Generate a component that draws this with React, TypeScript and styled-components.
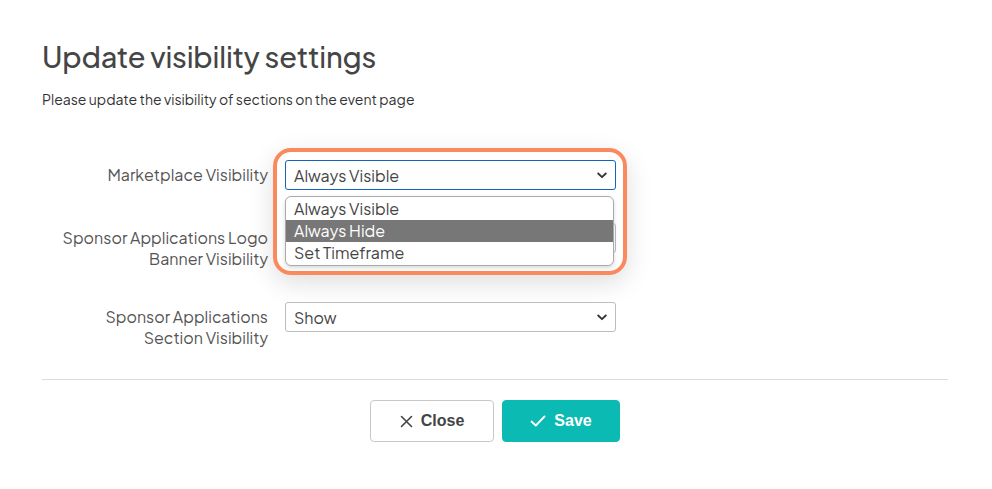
import React from 'react';
import styled, { createGlobalStyle } from 'styled-components';

const GlobalStyle = createGlobalStyle`
  body {
    margin: 0;
    background: #ffffff;
    font-family: "Plus Jakarta Sans", Inter, "Noto Sans", sans-serif;
  }
`;

const Page = styled.div`
  width: 992px;
  height: 489px;
  box-sizing: border-box;
  padding: 37px 44px 0 42px;
`;

const Title = styled.h1`
  margin: 0;
  font-size: 29px;
  font-weight: 500;
  line-height: 38px;
  color: #454545;
  letter-spacing: -0.2px;
`;

const Subtitle = styled.p`
  margin: 15px 0 0;
  font-size: 14px;
  line-height: 18px;
  color: #333;
`;

const Form = styled.div`
  display: flex;
  flex-direction: column;
  gap: 33px;
  margin-top: 52px;
`;

const Row = styled.div`
  display: grid;
  grid-template-columns: 226px 331px;
  column-gap: 17px;
  align-items: start;
`;

const Label = styled.div`
  text-align: right;
  padding-top: 4px;
  font-size: 16px;
  line-height: 21px;
  color: #555;
`;

const Field = styled.div`
  position: relative;
`;

const SelectBox = styled.div<{ $focused?: boolean }>`
  height: 30px;
  box-sizing: border-box;
  display: flex;
  align-items: center;
  justify-content: space-between;
  padding: 0 8px;
  background: #fff;
  border: 1px solid ${p => (p.$focused ? '#1565c0' : '#bdbdbd')};
  border-radius: 3px;
  font-size: 16px;
  color: #444;
`;

const Ring = styled.div`
  position: absolute;
  left: -12px;
  top: -12px;
  width: 354px;
  height: 127px;
  box-sizing: border-box;
  border: 4px solid #fa8a5e;
  border-radius: 18px;
  box-shadow: 0 8px 26px rgba(0, 0, 0, 0.13);
  pointer-events: none;
`;

const Menu = styled.ul`
  position: absolute;
  left: 0;
  top: 36px;
  width: 329px;
  margin: 0;
  padding: 1px 0;
  list-style: none;
  box-sizing: border-box;
  background: #fff;
  border: 1px solid #aaa;
  border-radius: 6px;
  box-shadow: 0 2px 4px rgba(0, 0, 0, 0.15);
  overflow: hidden;
  z-index: 2;
`;

const Option = styled.li<{ $active?: boolean }>`
  height: 22px;
  line-height: 22px;
  padding: 0 8px;
  font-size: 16px;
  color: ${p => (p.$active ? '#fff' : '#444')};
  background: ${p => (p.$active ? '#777777' : 'transparent')};
`;

const Divider = styled.hr`
  margin: 31px 0 0;
  border: none;
  border-top: 1px solid #dcdcdc;
`;

const Actions = styled.div`
  display: flex;
  justify-content: center;
  gap: 8px;
  margin-top: 20px;
`;

const Button = styled.button<{ $primary?: boolean }>`
  height: 42px;
  width: ${p => (p.$primary ? '118px' : '124px')};
  display: flex;
  align-items: center;
  justify-content: center;
  gap: 8px;
  border-radius: 4px;
  border: 1px solid ${p => (p.$primary ? '#0bbab3' : '#c8c8c8')};
  background: ${p => (p.$primary ? '#0bbab3' : '#fff')};
  color: ${p => (p.$primary ? '#fff' : '#444')};
  font-family: "Liberation Sans", Arial, sans-serif;
  font-weight: 700;
  font-size: 16px;
  cursor: pointer;
`;

const Chevron = () => (
  <svg width="10" height="7" viewBox="0 0 10 7" fill="none">
    <path d="M1.2 1.5 L5 5.2 L8.8 1.5" stroke="#333" strokeWidth="1.8" strokeLinecap="round" strokeLinejoin="round" />
  </svg>
);

const options = ['Always Visible', 'Always Hide', 'Set Timeframe'];

export default function App() {
  return (
    <Page>
      <GlobalStyle />
      <Title>Update visibility settings</Title>
      <Subtitle>Please update the visibility of sections on the event page</Subtitle>
      <Form>
        <Row>
          <Label>Marketplace Visibility</Label>
          <Field>
            <Ring />
            <SelectBox $focused>
              <span>Always Visible</span>
              <Chevron />
            </SelectBox>
            <Menu>
              {options.map(o => (
                <Option key={o} $active={o === 'Always Hide'}>{o}</Option>
              ))}
            </Menu>
          </Field>
        </Row>
        <Row>
          <Label>Sponsor Applications Logo<br />Banner Visibility</Label>
          <Field>
            <SelectBox>
              <span>Show</span>
              <Chevron />
            </SelectBox>
          </Field>
        </Row>
        <Row>
          <Label>Sponsor Applications<br />Section Visibility</Label>
          <Field>
            <SelectBox>
              <span>Show</span>
              <Chevron />
            </SelectBox>
          </Field>
        </Row>
      </Form>
      <Divider />
      <Actions>
        <Button>
          <svg width="13" height="13" viewBox="0 0 13 13">
            <path d="M1.5 1.5 L11.5 11.5 M11.5 1.5 L1.5 11.5" stroke="#444" strokeWidth="1.6" strokeLinecap="round" />
          </svg>
          Close
        </Button>
        <Button $primary>
          <svg width="16" height="12" viewBox="0 0 16 12">
            <path d="M1.5 6.5 L5.8 10.5 L14.5 1.5" stroke="#fff" strokeWidth="1.8" fill="none" strokeLinecap="round" strokeLinejoin="round" />
          </svg>
          Save
        </Button>
      </Actions>
    </Page>
  );
}
